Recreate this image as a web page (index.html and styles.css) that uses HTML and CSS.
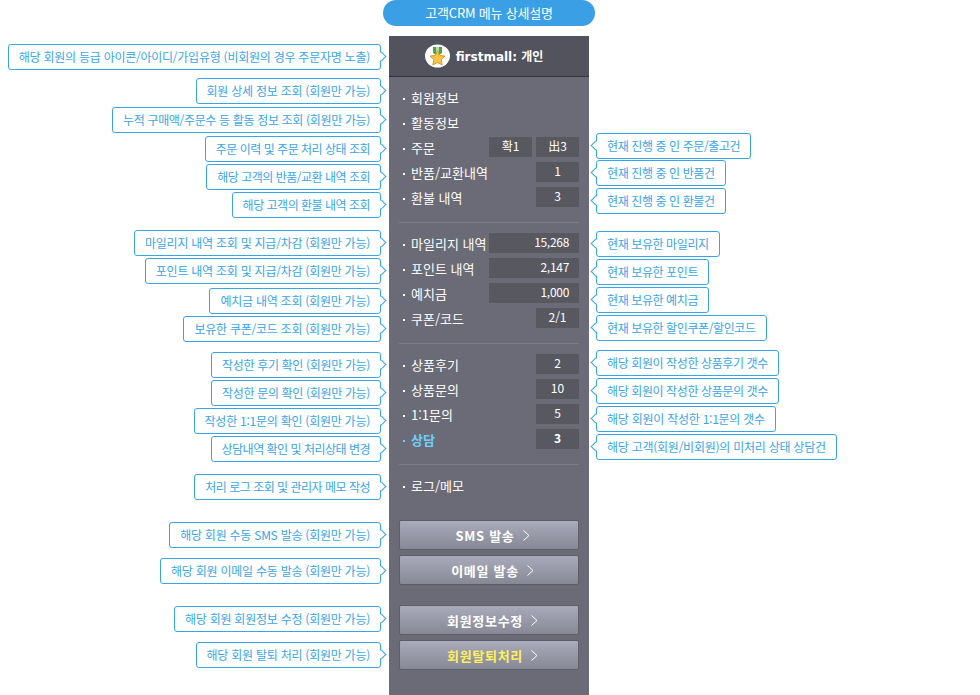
FILE: index.html
```html
<!DOCTYPE html>
<html lang="ko">
<head>
    <meta charset="UTF-8">
    <title>고객CRM 메뉴 상세설명</title>
    <link rel="stylesheet" href="styles.css">
</head>
<body>
    <div class="page-title">고객CRM 메뉴 상세설명</div>
    <div class="layout">
        <!-- left notes -->
        <div class="notes notes-left">
            <div class="note">해당 회원의 등급 아이콘/아이디/가입유형 (비회원의 경우 주문자명 노출)</div>
            <div class="note gap-8">회원 상세 정보 조회 (회원만 가능)</div>
            <div class="note gap-3 note-snug">누적 구매액/주문수 등 활동 정보 조회 (회원만 가능)</div>
            <div class="note gap-3 note-tight">주문 이력 및 주문 처리 상태 조회</div>
            <div class="note gap-2 note-tight">해당 고객의 반품/교환 내역 조회</div>
            <div class="note gap-2 note-tight">해당 고객의 환불 내역 조회</div>
            <div class="note gap-12">마일리지 내역 조회 및 지급/차감 (회원만 가능)</div>
            <div class="note gap-2">포인트 내역 조회 및 지급/차감 (회원만 가능)</div>
            <div class="note gap-4">예치금 내역 조회 (회원만 가능)</div>
            <div class="note gap-2">보유한 쿠폰/코드 조회 (회원만 가능)</div>
            <div class="note gap-10 note-snug">작성한 후기 확인 (회원만 가능)</div>
            <div class="note gap-2 note-snug">작성한 문의 확인 (회원만 가능)</div>
            <div class="note gap-2">작성한 1:1문의 확인 (회원만 가능)</div>
            <div class="note gap-2 note-tight">상담내역 확인 및 처리상태 변경</div>
            <div class="note gap-12 note-tight">처리 로그 조회 및 관리자 메모 작성</div>
            <div class="note gap-22">해당 회원 수동 SMS 발송 (회원만 가능)</div>
            <div class="note gap-10">해당 회원 이메일 수동 발송 (회원만 가능)</div>
            <div class="note gap-22">해당 회원 회원정보 수정 (회원만 가능)</div>
            <div class="note gap-10">해당 회원 탈퇴 처리 (회원만 가능)</div>
        </div>

        <!-- crm panel -->
        <div class="panel">
            <div class="panel-head">
                <svg class="grade-icon" width="25" height="24" viewBox="0 0 25 24">
                    <ellipse cx="12.500" cy="12" rx="12.500" ry="11.500" fill="#fff"/>
                    <path d="M8 3h9v6l-4.500 3L8 9z" fill="#4fa04a"/>
                    <path d="M11 3h3v7h-3z" fill="#b7dfa0"/>
                    <path d="M12.500 6.500l2.300 4.900 5.200.7-3.800 3.600 1 5.300-4.700-2.600-4.700 2.600 1-5.300-3.800-3.600 5.200-.7z" fill="#f6c544" stroke="#c98a1e" stroke-width=".8"/>
                </svg>
                <span class="member-name">firstmall: 개인</span>
            </div>
            <div class="panel-body">
                <div class="group">
                    <div class="row"><span class="row-label">회원정보</span></div>
                    <div class="row"><span class="row-label">활동정보</span></div>
                    <div class="row"><span class="row-label">주문</span><span class="val val-half">확1</span><span class="val val-half">出3</span></div>
                    <div class="row"><span class="row-label">반품/교환내역</span><span class="val val-half">1</span></div>
                    <div class="row"><span class="row-label">환불 내역</span><span class="val val-half">3</span></div>
                </div>
                <div class="group">
                    <div class="row"><span class="row-label">마일리지 내역</span><span class="val val-wide">15,268</span></div>
                    <div class="row"><span class="row-label">포인트 내역</span><span class="val val-wide">2,147</span></div>
                    <div class="row"><span class="row-label">예치금</span><span class="val val-wide">1,000</span></div>
                    <div class="row"><span class="row-label">쿠폰/코드</span><span class="val val-half">2/1</span></div>
                </div>
                <div class="group">
                    <div class="row"><span class="row-label">상품후기</span><span class="val val-half">2</span></div>
                    <div class="row"><span class="row-label">상품문의</span><span class="val val-half">10</span></div>
                    <div class="row"><span class="row-label">1:1문의</span><span class="val val-half">5</span></div>
                    <div class="row row-active"><span class="row-label">상담</span><span class="val val-half val-strong">3</span></div>
                </div>
                <div class="group group-last">
                    <div class="row"><span class="row-label">로그/메모</span></div>
                </div>
                <div class="btn-set">
                    <div class="btn">SMS 발송<svg class="chev" width="7" height="11" viewBox="0 0 7 11"><path d="M.5.500L6 5.500.5 10.500"/></svg></div>
                    <div class="btn">이메일 발송<svg class="chev" width="7" height="11" viewBox="0 0 7 11"><path d="M.5.500L6 5.500.5 10.500"/></svg></div>
                </div>
                <div class="btn-set">
                    <div class="btn">회원정보수정<svg class="chev" width="7" height="11" viewBox="0 0 7 11"><path d="M.5.500L6 5.500.5 10.500"/></svg></div>
                    <div class="btn btn-yellow">회원탈퇴처리<svg class="chev" width="7" height="11" viewBox="0 0 7 11"><path d="M.5.500L6 5.500.5 10.500"/></svg></div>
                </div>
            </div>
        </div>

        <!-- right notes -->
        <div class="notes notes-right">
            <div class="note">현재 진행 중 인 주문/출고건</div>
            <div class="note gap-1">현재 진행 중 인 반품건</div>
            <div class="note gap-2">현재 진행 중 인 환불건</div>
            <div class="note gap-17">현재 보유한 마일리지</div>
            <div class="note gap-2">현재 보유한 포인트</div>
            <div class="note gap-2">현재 보유한 예치금</div>
            <div class="note gap-2">현재 보유한 할인쿠폰/할인코드</div>
            <div class="note gap-9">해당 회원이 작성한 상품후기 갯수</div>
            <div class="note gap-2">해당 회원이 작성한 상품문의 갯수</div>
            <div class="note gap-2 note-loose">해당 회원이 작성한 1:1문의 갯수</div>
            <div class="note gap-2 note-loose">해당 고객(회원/비회원)의 미처리 상태 상담건</div>
        </div>
    </div>
</body>
</html>
```

FILE: styles.css
```css
body {
    margin: 0;
    height: 695px;
    overflow: hidden;
    background: #fff;
    font-family: "Noto Sans CJK KR", "Noto Sans", sans-serif;
    font-size: 12px;
}
.page-title {
    width: 212px;
    height: 26px;
    margin-left: 383px;
    border-radius: 13px;
    background: #3a9fe4;
    color: #fff;
    font-size: 13px;
    letter-spacing: -0.2px;
    line-height: 26px;
    text-align: center;
}
.layout {
    display: grid;
    grid-template-columns: 382px 200px 1fr;
    column-gap: 7px;
    margin-top: 10px;
}

/* callouts */
.notes {
    display: flex;
    flex-direction: column;
}
.notes-left {
    align-items: flex-end;
    padding-top: 8px;
    padding-right: 1px;
    letter-spacing: -0.25px;
}
.notes-right {
    align-items: flex-start;
    padding-top: 97px;
    letter-spacing: -0.4px;
}
.note {
    position: relative;
    box-sizing: border-box;
    height: 26px;
    padding: 0 10px;
    border: 1px solid #3aa5e6;
    border-radius: 3px;
    background: #fff;
    color: #3aa5e6;
    line-height: 23px;
    white-space: nowrap;
}
.note-loose {
    letter-spacing: -0.25px;
}
.note-snug {
    letter-spacing: -0.34px;
}
.note-tight {
    letter-spacing: -0.5px;
}
.note::after {
    content: "";
    position: absolute;
    top: 8px;
    width: 6px;
    height: 6px;
    background: #fff;
    border: 1px solid #3aa5e6;
    border-width: 1px 1px 0 0;
    transform: rotate(45deg);
}
.notes-left .note::after {
    right: -5px;
}
.notes-right .note::after {
    left: -5px;
    transform: rotate(-135deg);
}
.gap-1 { margin-top: 1px; }
.gap-2 { margin-top: 2px; }
.gap-3 { margin-top: 3px; }
.gap-4 { margin-top: 4px; }
.gap-8 { margin-top: 8px; }
.gap-9 { margin-top: 9px; }
.gap-10 { margin-top: 10px; }
.gap-12 { margin-top: 12px; }
.gap-17 { margin-top: 17px; }
.gap-22 { margin-top: 22px; }

/* panel */
.panel {
    height: 659px;
    background: #6a6b76;
    color: #fff;
}
.panel-head {
    display: flex;
    align-items: center;
    justify-content: center;
    gap: 6px;
    height: 40px;
    padding-right: 10px;
    border-bottom: 1px solid #33343e;
    background: #52535d;
}
.grade-icon {
    flex: none;
}
.member-name {
    margin-bottom: 2px;
    font-family: "DejaVu Sans", "Noto Sans CJK KR", sans-serif;
    font-size: 12px;
    font-weight: bold;
}
.panel-body {
    padding: 8px 10px 0;
}
.group {
    padding-bottom: 12px;
    margin-bottom: 8px;
    border-bottom: 1px solid #7c7d88;
}
.group-last {
    border-bottom: 0;
    margin-bottom: 10px;
}
.row {
    display: flex;
    align-items: center;
    justify-content: flex-end;
    gap: 4px;
    height: 25px;
}
.row-label {
    flex: 1;
    margin-right: -10px;
    font-size: 13px;
    white-space: nowrap;
}
.row-label::before {
    content: "";
    display: inline-block;
    width: 2px;
    height: 2px;
    margin: 0 6px 3px 4px;
    background: currentColor;
}
.row-active {
    color: #6fd0ff;
    font-weight: bold;
}
.val {
    flex: none;
    align-self: flex-start;
    box-sizing: border-box;
    height: 20px;
    margin-top: 2px;
    background: #585861;
    color: #fff;
    font-weight: normal;
    line-height: 18px;
    text-align: center;
}
.val-half {
    width: 43px;
}
.val-wide {
    width: 90px;
    padding-right: 10px;
    letter-spacing: -0.3px;
    text-align: right;
}
.val-strong {
    font-weight: bold;
}
.btn-set {
    margin-bottom: 20px;
}
.btn {
    display: flex;
    align-items: center;
    justify-content: center;
    box-sizing: border-box;
    height: 30px;
    margin-bottom: 5px;
    padding-left: 7px;
    border: 1px solid #5d5e6a;
    border-radius: 2px;
    background: linear-gradient(#a9abba, #868896);
    font-size: 13px;
    font-weight: bold;
    letter-spacing: 0.7px;
}
.btn-yellow {
    color: #ffef5a;
}
.chev {
    flex: none;
    margin-left: 8px;
    fill: none;
    stroke: #fff;
}
```
